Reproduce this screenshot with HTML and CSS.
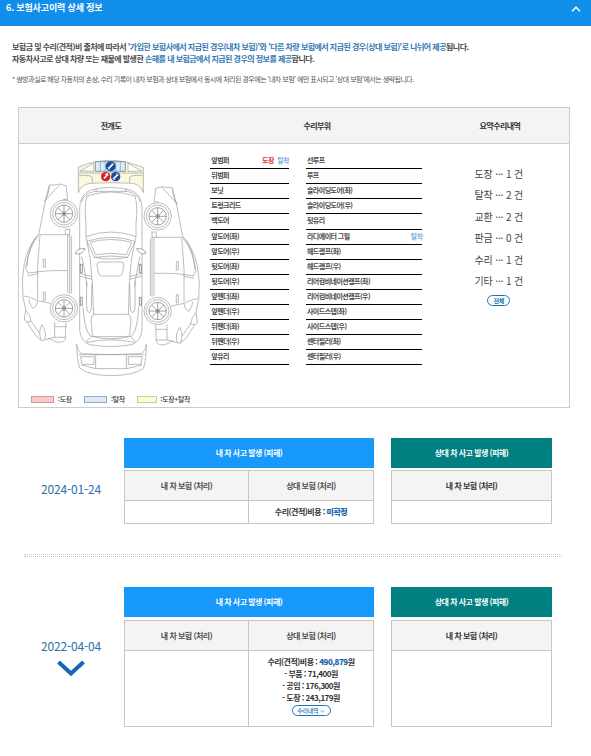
FILE: index.html
```html
<!DOCTYPE html>
<html lang="ko">
<head>
<meta charset="utf-8">
<title>보험사고이력 상세 정보</title>
<link rel="stylesheet" href="styles.css">
</head>
<body>
<header class="bar">
  <h1>6. 보험사고이력 상세 정보</h1>
  <svg class="chev" width="10" height="6" viewBox="0 0 10 6"><path d="M1 5.2 5 1.2 9 5.2" fill="none" stroke="#fff" stroke-width="1.5"/></svg>
</header>

<section class="intro">
  <p class="l1">보험금 및 수리(견적)비 출처에 따라서 <b>'가입한 보험사에서 지급된 경우(내차 보험)'와 '다른 차량 보험에서 지급된 경우(상대 보험)'로 나뉘어 제공</b>됩니다.</p>
  <p class="l2">자동차사고로 상대 차량 또는 재물에 발생한 <b>손해를 내 보험금에서 지급된 경우의 정보를 제공</b>합니다.</p>
  <p class="note">* 쌍방과실로 해당 자동차의 손상, 수리 기록이 내차 보험과 상대 보험에서 동시에 처리된 경우에는 '내차 보험' 에만 표시되고 '상대 보험'에서는 생략됩니다.</p>
</section>

<section class="panel">
  <div class="phead"><span>전개도</span><span>수리부위</span><span>요약수리내역</span></div>
  <div class="pbody">
    <div class="diagram">
      <svg width="190" height="246" viewBox="12 132 570 738" fill="none" stroke="#9a9a9a" stroke-width="2">
        <defs>
          <g id="wheel">
            <circle r="41" fill="#fff"/><circle r="34"/><circle r="26" stroke="#777"/><circle r="5" stroke="#777"/>
            <path stroke="#777" d="M0-26V26M-26 0H26M-18-18 18 18M18-18-18 18"/>
          </g>
          <g id="side">
            <path d="M103 255H118L134 252 153 257 158 298M103 255Q88 310 80 360L72 400Q38 440 28 490 18 540 24 590L32 630 28 660 36 666 62 707 80 722 104 716 124 726Q146 730 151 716L153 668"/>
            <path d="M103 258Q100 290 88 304L134 254M158 298H144M72 404Q40 444 32 505L40 520M75 404H165M75 404Q64 500 68 600M60 414Q38 450 36 500M151 390V404M164 388V582M158 404V580M169 408V580M151 388H166"/>
            <path d="M38 520Q90 510 158 512M38 528 70 520M68 602 106 610M26 588Q54 592 68 604 66 620 54 626 42 612 42 598M32 630Q48 648 48 664L36 666M48 664 74 700M79 720Q68 698 81 674 96 698 89 718M119 666V712H153M119 712 98 716M119 680H153"/>
            <path d="M85 477H91V502H85ZM85 576H91V601H85Z"/>
            <use href="#wheel" x="147" y="341"/><use href="#wheel" x="147" y="625"/>
          </g>
        </defs>
        <use href="#side"/>
        <use href="#side" transform="translate(575 8) scale(-1 1)"/>

        <path fill="#fbf9dc" d="M190 278V201Q240 181 287 181T385 203V278Q378 254 352 250 287 246 225 250 196 255 190 278Z"/>
        <path fill="#fff" d="M195 213 236 190V214ZM380 213 339 190V214Z"/>
        <path d="M191 219H384M232 249V232Q228 224 192 227M344 249V232Q348 224 383 227"/>
        <path fill="#d9ebf8" stroke="#5b6f82" d="M241 185H331V214H241Z"/>
        <path stroke="#7b96ad" d="M256 185V214M271 185V214M302 185V214M316 185V214"/>

        <path d="M194 452V325Q194 282 228 270 287 255 346 270 381 282 381 325V690Q378 724 350 734 287 745 224 734 197 724 194 690Z"/>
        <path d="M213 410V370Q207 320 216 288 287 264 360 288 369 320 363 370V410M200 306Q206 280 240 274H336Q370 280 376 306M243 264V275M332 264V275M213 410Q287 382 363 410M216 424Q287 400 360 424L338 472Q287 464 238 472ZM226 427Q287 410 350 427L334 464Q287 456 242 464ZM213 410Q230 480 232 550L236 645M363 410Q345 480 343 550L340 645M238 472Q287 482 338 472"/>
        <path d="M254 486H318Q327 486 327 496L322 520Q320 528 312 528H260Q252 528 251 520L246 496Q247 486 254 486ZM238 643H340Q348 648 348 658L344 705Q342 710 332 710H244Q232 710 232 705L228 658Q229 646 238 643ZM200 470Q214 530 215 560M375 470Q361 530 360 560M194 520 231 530M381 520 344 530M194 528 231 538M381 528 344 538M216 545Q213 600 216 630 225 648 229 624L231 550M359 545Q362 600 359 630 350 648 346 624L344 550M204 620Q208 690 226 708 287 725 350 708 368 690 371 620M212 726 230 708M362 726 346 708M216 727Q287 712 358 727"/>
        <path stroke="#666" d="M196 493H202V518H196ZM373 493H379V518H373ZM196 592H202V616H196ZM373 592H379V616H373Z"/>
        <path fill="#fff" stroke="#777" d="M210 446Q186 444 181 460 196 466 207 452ZM365 446Q388 444 393 460 379 466 368 452Z"/>

        <path d="M185 733Q188 757 202 761 287 767 376 761 391 757 394 733M185 733Q186 780 194 804 220 826 287 827 362 826 386 804 394 776 394 733M191 764H389M197 770H237V793H201ZM340 770H382L378 793H340ZM242 764V806M334 764V806M200 795 242 806H334L382 795"/>
        <g stroke="#fff" stroke-width="5">
          <circle cx="287" cy="199" r="15" fill="#164d96" stroke="none"/><path d="M281 205 293 193"/><path stroke-width="3" d="M278 203 284 209M290 189 296 195"/>
          <circle cx="272" cy="230" r="14" fill="#d8232f" stroke="none"/><path d="M267 235 274 228" /><path d="M272 226 279 222" stroke-width="8"/>
          <circle cx="302" cy="230" r="14" fill="#164d96" stroke="none"/><path d="M296 236 308 224"/><path stroke-width="3" d="M293 234 299 240M305 220 311 226"/>
        </g>
      </svg>
      <ul class="legend"><li><i class="red"></i>:도장</li><li><i class="blue"></i>:탈착</li><li><i class="yel"></i>:도장+탈착</li></ul>
    </div>
    <ul class="parts a">
      <li>앞범퍼<span><em>도장</em> 탈착</span></li><li>뒤범퍼</li><li>보닛</li><li>트렁크리드</li><li>백도어</li><li>앞도어(좌)</li><li>앞도어(우)</li><li>뒷도어(좌)</li><li>뒷도어(우)</li><li>앞펜더(좌)</li><li>앞펜더(우)</li><li>뒤펜더(좌)</li><li>뒤펜더(우)</li><li>앞유리</li>
    </ul>
    <ul class="parts b">
      <li>선루프</li><li>루프</li><li>슬라이딩도어(좌)</li><li>슬라이딩도어(우)</li><li>뒷유리</li><li>라디에이터 그릴<span>탈착</span></li><li>헤드램프(좌)</li><li>헤드램프(우)</li><li>리어컴비네이션램프(좌)</li><li>리어컴비네이션램프(우)</li><li>사이드스텝(좌)</li><li>사이드스텝(우)</li><li>센터필러(좌)</li><li>센터필러(우)</li>
    </ul>
    <div class="summary">
      <p>도장 ··· 1 건</p><p>탈착 ··· 2 건</p><p>교환 ··· 2 건</p><p>판금 ··· 0 건</p><p>수리 ··· 1 건</p><p>기타 ··· 1 건</p>
      <button class="pill">전체</button>
    </div>
  </div>
</section>

<section class="case first">
  <div class="date">2024-01-24</div>
  <div class="mine">
    <h2>내 차 사고 발생 (피해)</h2>
    <div class="grid"><div class="th">내 차 보험 (처리)</div><div class="th">상대 보험 (처리)</div><div class="td"></div><div class="td"><p>수리(견적)비용 : <b>미확정</b></p></div></div>
  </div>
  <div class="other">
    <h2>상대 차 사고 발생 (피해)</h2>
    <div class="grid"><div class="th">내 차 보험 (처리)</div><div class="td"></div></div>
  </div>
</section>
<div class="sep"></div>
<section class="case second">
  <div class="date">2022-04-04
    <svg width="28" height="17" viewBox="0 0 28 17"><path d="M1.5 2 14 13.500 26.500 2" fill="none" stroke="#1467b3" stroke-width="4"/></svg>
  </div>
  <div class="mine">
    <h2>내 차 사고 발생 (피해)</h2>
    <div class="grid"><div class="th">내 차 보험 (처리)</div><div class="th">상대 보험 (처리)</div><div class="td"></div>
      <div class="td"><p>수리(견적)비용 : <b>490,879</b>원</p><p>- 부품 : 71,400원</p><p>- 공임 : 176,300원</p><p>- 도장 : 243,179원</p><button class="pill wide">수리내역 <svg width="5" height="3" viewBox="0 0 5 3"><path d="M.5.5 2.500 2 4.500.5" fill="none" stroke="#1b75b5" stroke-width=".6"/></svg></button></div></div>
  </div>
  <div class="other">
    <h2>상대 차 사고 발생 (피해)</h2>
    <div class="grid"><div class="th">내 차 보험 (처리)</div><div class="td"></div></div>
  </div>
</section>
</body>
</html>
```
FILE: styles.css
```css
* { box-sizing: border-box; margin: 0; padding: 0; }
body { width: 591px; height: 756px; overflow: hidden; background: #fff; color: #333; font-family: "Noto Sans CJK KR", sans-serif; font-size: 8px; white-space: nowrap; }
ul { list-style: none; }
em { font-style: normal; }

.bar { display: flex; justify-content: space-between; height: 26px; padding: 0 10px 0 6px; background: #118eea; color: #fff; }
.bar h1 { font-size: 9px; line-height: 16px; letter-spacing: -0.14px; }
.chev { margin-top: 6px; }

.intro { padding: 15px 12px 0; height: 81px; font-weight: 700; color: #4a4a4a; }
.intro p { line-height: 12px; letter-spacing: -0.54px; }
.intro b { color: #3277b3; font-weight: 700; }
.intro .note { margin-top: 8px; font-size: 7px; letter-spacing: -0.515px; color: #555; font-weight: 400; }

.panel { width: 552px; height: 301px; margin-left: 18px; border: 1px solid #ccc; }
.phead { display: grid; grid-template-columns: 184px 228px 138px; height: 36px; border-bottom: 1px solid #ccc; background: #f4f4f4; line-height: 36px; text-align: center; font-weight: 700; letter-spacing: -0.55px; color: #333; }
.pbody { display: flex; }
.diagram { width: 191px; height: 263px; }
.diagram > svg { display: block; height: 246px; }
.legend { display: flex; padding-left: 12px; margin-top: 4px; font-size: 7px; line-height: 10px; letter-spacing: -0.4px; font-weight: 500; }
.legend li { display: flex; align-items: center; width: 53px; }
.legend i { width: 23px; height: 7px; margin-right: 4px; border: 1px solid #c99; background: #fbc9c9; }
.legend .blue { border-color: #9ab; background: #dbeafb; }
.legend .yel { width: 24px; border-color: #cc9; background: #fdfbd2; }

.parts { font-size: 7px; letter-spacing: -0.55px; font-weight: 700; color: #4a4a4a; padding-top: 10px; }
.parts li { display: flex; justify-content: space-between; height: 15px; line-height: 13px; border-bottom: 1px solid #000; padding-left: 1px; }
.parts li:nth-child(5) { height: 16px; }
.parts span { color: #78b4e0; }
.parts em { color: #e0303c; font-weight: 700; margin-right: 2px; }
.a { width: 79px; }
.b { width: 116px; margin-left: 17px; }
.parts.b span { margin-right: -1px; }

.summary { width: 148px; padding-top: 19px; padding-left: 7px; text-align: center; font-size: 10px; letter-spacing: -0.15px; color: #444; }
.summary p { height: 21.4px; line-height: 21.4px; }
.pill { display: block; width: 23px; height: 11px; margin: 4px auto 0; border: 1px solid #1b75b5; border-radius: 6px; background: #fff; color: #1b75b5; font: 700 6px/9px "Noto Sans CJK KR", sans-serif; letter-spacing: -0.3px; }
.wide { width: 39px; margin-top: 1px; font-weight: 500; }
.parts.a { margin-left: 1px; }

.case { display: flex; }
.first { margin-top: 30px; height: 118px; }
.second { margin-top: 30px; }
.date { display: flex; flex-direction: column; align-items: center; width: 124px; padding: 43px 0 0 18px; font-size: 12px; line-height: 16px; letter-spacing: -0.15px; color: #2a6fae; }
.date svg { margin-top: 6px; }
.second .date { padding-top: 51px; }
.mine { width: 250px; }
.other { width: 161px; margin-left: 17px; }
.case h2 { height: 30px; line-height: 30px; background: #1798fb; color: #fff; font-size: 8px; text-align: center; letter-spacing: -0.52px; }
.other h2 { background: #008080; }
.grid { display: grid; grid-template-columns: 124px 124px; grid-template-rows: 30px 22px; margin-top: 2px; border: 1px solid #c6c6c6; }
.other .grid { grid-template-columns: 159px; }
.second .grid { grid-template-rows: 30px 75px; margin-top: 3px; }
.th { background: #f4f4f4; border-bottom: 1px solid #c6c6c6; line-height: 30px; text-align: center; font-weight: 700; color: #505050; letter-spacing: -0.5px; }
.other .th { color: #333; }
.td { text-align: center; font-weight: 700; line-height: 12px; letter-spacing: -0.5px; padding-top: 5px; }
.td b { color: #1b66a8; }
.mine .th:first-child, .mine .td:nth-child(3) { border-right: 1px solid #c6c6c6; }

.sep { width: 538px; height: 3px; margin: -2px 0 0 24px; border-top: 1px dotted #ccc; border-bottom: 1px dotted #ccc; }
```
